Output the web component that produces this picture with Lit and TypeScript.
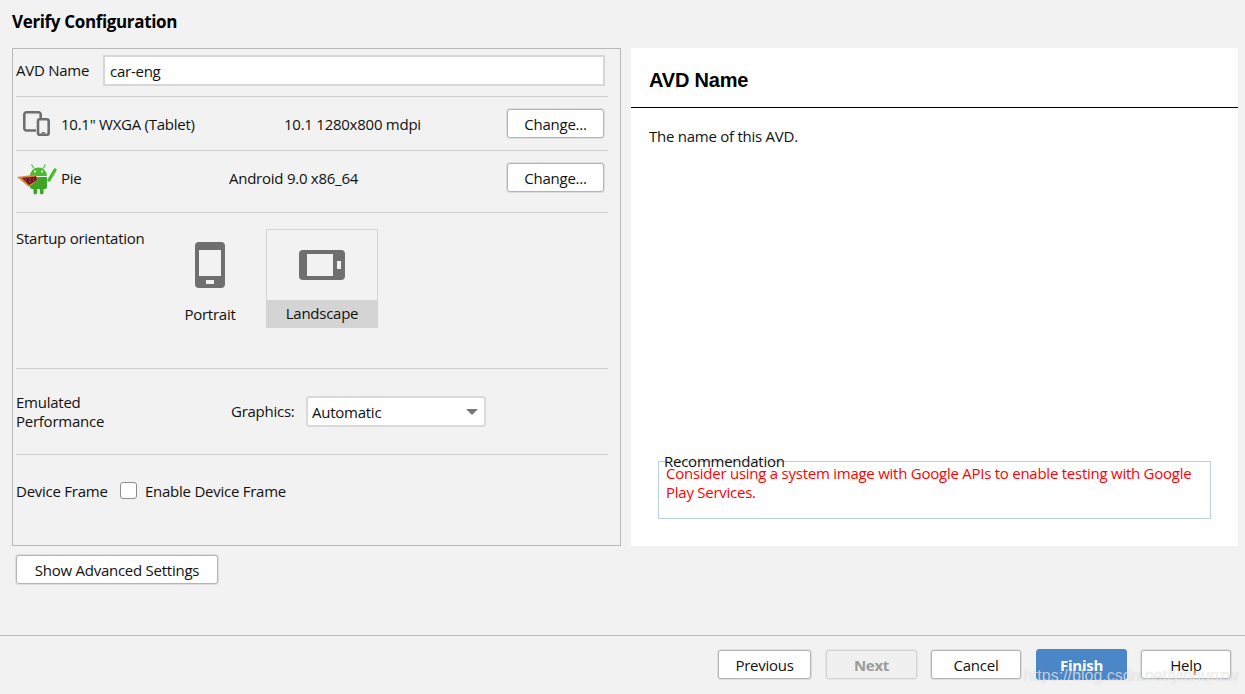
import { LitElement, html, css } from "lit";
import { customElement } from "lit/decorators.js";

@customElement("app-root")
export class AppRoot extends LitElement {
  static styles = css`
    :host {
      display: block;
      width: 1245px;
      height: 694px;
      background: #f2f2f2;
      font-family: "Open Sans", "Noto Sans", sans-serif;
      font-size: 15px;
      letter-spacing: -0.25px;
      color: #111;
      overflow: hidden;
      position: relative;
    }
    .page { display: flex; flex-direction: column; height: 694px; box-sizing: border-box; }
    .title {
      font-weight: 700; font-size: 17px; line-height: 22px; letter-spacing: -0.35px;
      padding: 11px 0 0 12px; height: 48px; box-sizing: border-box; flex: none; color: #000;
    }
    .main { display: flex; gap: 10px; padding-left: 12px; height: 498px; flex: none; }
    .left {
      width: 609px; box-sizing: border-box; border: 1px solid #b9b9b9;
      padding: 0 12px 0 3px; display: flex; flex-direction: column;
    }
    .row { border-bottom: 1px solid #cfcfcf; box-sizing: border-box; display: flex; align-items: center; flex: none; }
    .r1 { height: 48px; }
    .r2 { height: 54px; }
    .r3 { height: 62px; padding-bottom: 8px; }
    .r4 { height: 156px; align-items: flex-start; }
    .r5 { height: 86px; }
    .r6 { border: none; flex: 1; align-items: flex-start; padding-top: 26px; }
    .input {
      margin-left: 13px; width: 502px; height: 31px; box-sizing: border-box;
      background: #fff; border: 2px solid #d6d6d6; padding-left: 5px;
      display: flex; align-items: center; margin-top: -4px;
    }
    .r1 .lbl { margin-top: -6px; width: 74px; white-space: nowrap; }
    .btn {
      background: #fff; border: 1px solid #b4b4b4; border-radius: 3px;
      box-shadow: 0 0 0 1px #dedede; box-sizing: border-box;
      display: flex; align-items: center; justify-content: center;
      height: 29px; flex: none; color: #111;
    }
    .change { width: 97px; margin: 0 4px 0 auto; }
    .dev-ic { width: 27px; height: 25px; margin-left: 7px; flex: none; }
    .col-name { margin-left: 11px; width: 223px; }
    .and-ic { width: 42px; height: 34px; flex: none; }
    .col-pie { margin-left: 3px; width: 168px; }
    .orient { display: flex; }
    .orient .lbl { width: 138px; padding-top: 15px; }
    .opt { width: 112px; height: 99px; box-sizing: border-box; display: flex; flex-direction: column; align-items: center; }
    .opt svg { flex: none; }
    .opt .cap { height: 28px; line-height: 27px; width: 100%; text-align: center; margin-top: auto; }
    .opt.sel { border: 1px solid #d5d5d5; margin-top: 16px; }
    .opt.sel .cap { background: #d4d4d4; margin: auto -1px -1px; width: 112px; }
    .opt.port { margin-top: 16px; height: 100px; padding-bottom: 0; }
    .opt.port svg { margin-top: 13px; }
    .opt.sel svg { margin-top: 20px; }
    .r5 .lbl { width: 215px; line-height: 19px; }
    .gfx { width: 62px; margin-top: -2px; white-space: nowrap; }
    .select {
      margin-left: 13px; width: 180px; height: 31px; box-sizing: border-box;
      background: #fff; border: 2px solid #d9d9d9; border-radius: 3px;
      padding: 0 6px 0 4px; display: flex; align-items: center; justify-content: space-between;
    }
    .tri { width: 0; height: 0; border-left: 6px solid transparent; border-right: 6px solid transparent; border-top: 6px solid #777; }
    .r6 .lbl { width: 90px; white-space: nowrap; }
    .check { width: 17px; height: 17px; margin: 1px 8px 0 14px; box-sizing: border-box; background: #fff; border: 1px solid #8e8e8e; border-radius: 3px; flex: none; }
    .right { width: 607px; background: #fff; display: flex; flex-direction: column; }
    .rhead {
      height: 60px; box-sizing: border-box; border-bottom: 1px solid #000; flex: none;
      font-family: "Liberation Sans", Arial, sans-serif; font-weight: 700; font-size: 20px; letter-spacing: -0.2px;
      color: #000; padding: 20px 0 0 18px; line-height: 25px;
    }
    .rdesc { padding: 19px 0 0 18px; line-height: 19px; flex: 1; }
    .rec {
      position: relative; margin: 0 27px 27px; height: 58px; box-sizing: border-box;
      border: 1px solid #b8cfe5; color: #f00; padding: 2px 7px 0; line-height: 19px;
    }
    .rec .legend {
      position: absolute; left: 5px; top: -10px; color: #111; line-height: 18px; padding-right: 2px;
    }
    .rec .legend::before {
      content: ""; position: absolute; left: 0; right: 0; top: 9px; height: 2px; background: #fff; z-index: -1;
    }
    .adv { padding: 9px 0 0 16px; height: 89px; box-sizing: border-box; flex: none; }
    .adv .btn { width: 202px; }
    .foot {
      flex: 1; border-top: 1px solid #bdbdbd; display: flex; gap: 14px; justify-content: flex-end;
      padding: 14px 14px 0 0;
    }
    .foot .btn { width: 90px; height: 29px; }
    .foot .prev { width: 93px; }
    .foot .dis { width: 91px; margin-left: 1px; background: #f0f0f0; border-color: #d4d4d4; box-shadow: 0 0 0 1px #e6e6e6; color: #9b9b9b; font-weight: 700; }
    .foot .pri { width: 91px; margin: -1px 0 0 1px; background: #4a86c8; border-color: #4a86c8; box-shadow: none; color: #fff; font-weight: 700; height: 31px; }
    .mark {
      position: absolute; left: 1024px; top: 666px; color: rgba(255,255,255,.62);
      font-family: "Liberation Sans", Arial, sans-serif; font-size: 16px; letter-spacing: 0; line-height: 20px;
      white-space: nowrap; text-shadow: 0 0 1px rgba(120,120,120,.35);
    }
  `;

  render() {
    return html`
      <div class="page">
        <div class="title">Verify Configuration</div>
        <div class="main">
          <div class="left">
            <div class="row r1">
              <span class="lbl">AVD Name</span>
              <div class="input">car-eng</div>
            </div>
            <div class="row r2">
              <svg class="dev-ic" viewBox="0 0 27 25" fill="none" stroke="#6f6f6f">
                <path d="M13 19.500H3.500A2.200 2.200 0 0 1 1.300 17.300V3.500A2.200 2.200 0 0 1 3.500 1.300H15.500A2.200 2.200 0 0 1 17.700 3.500V7" stroke-width="2.600"/>
                <rect x="15" y="8.300" width="10.700" height="15.400" rx="1.800" fill="#f2f2f2" stroke-width="2.600"/>
                <rect x="18.800" y="21" width="3" height="1.500" fill="#6f6f6f" stroke="none"/>
              </svg>
              <span class="col-name">10.1" WXGA (Tablet)</span>
              <span>10.1 1280x800 mdpi</span>
              <div class="btn change">Change...</div>
            </div>
            <div class="row r3">
              <svg class="and-ic" viewBox="0 0 42 34">
                <path d="M33 19L39 9" stroke="#4dbb2f" stroke-width="3.400" stroke-linecap="round"/>
                <path d="M14 15a8.500 8.500 0 0 1 17 0z" fill="#4dbb2f"/>
                <path d="M18 7.500L15.500 3.500M27 7.500L29.500 3.500" stroke="#4dbb2f" stroke-width="1.100"/>
                <circle cx="19" cy="10.500" r="1.100" fill="#fff"/><circle cx="26" cy="10.500" r="1.100" fill="#fff"/>
                <path d="M14 16h17v10a2 2 0 0 1-2 2h-13a2 2 0 0 1-2-2z" fill="#3da526"/>
                <rect x="17.500" y="25" width="3.600" height="8.500" rx="1.800" fill="#3da526"/>
                <rect x="24" y="25" width="3.600" height="8.500" rx="1.800" fill="#3da526"/>
                <path d="M1 16L20 13.500L22 19L13 26Z" fill="#d08a3c"/>
                <path d="M6 17L20 15.500L21 19L13 24Z" fill="#6d1226"/>
                <path d="M9 18l2 1M13 17l2 1.500M17 17l1.500 1.500M13 21l2-1M17 20l1-1" stroke="#d9475d" stroke-width="1"/>
              </svg>
              <span class="col-pie">Pie</span>
              <span>Android 9.0 x86_64</span>
              <div class="btn change">Change...</div>
            </div>
            <div class="row r4">
              <div class="orient">
                <div class="lbl">Startup orientation</div>
                <div class="opt port">
                  <svg width="30" height="46" viewBox="0 0 30 46">
                    <rect width="30" height="46" rx="4" fill="#6f6f6f"/>
                    <rect x="4" y="8" width="22" height="26" fill="#f2f2f2"/>
                    <rect x="11" y="38" width="8" height="4" fill="#f2f2f2"/>
                  </svg>
                  <div class="cap">Portrait</div>
                </div>
                <div class="opt sel">
                  <svg width="46" height="30" viewBox="0 0 46 30">
                    <rect width="46" height="30" rx="4" fill="#6f6f6f"/>
                    <rect x="8" y="4" width="26" height="22" fill="#f2f2f2"/>
                    <rect x="38" y="11" width="4" height="8" fill="#f2f2f2"/>
                  </svg>
                  <div class="cap">Landscape</div>
                </div>
              </div>
            </div>
            <div class="row r5">
              <div class="lbl">Emulated<br />Performance</div>
              <span class="gfx">Graphics:</span>
              <div class="select"><span>Automatic</span><span class="tri"></span></div>
            </div>
            <div class="row r6">
              <span class="lbl">Device Frame</span>
              <span class="check"></span>
              <span>Enable Device Frame</span>
            </div>
          </div>
          <div class="right">
            <div class="rhead">AVD Name</div>
            <div class="rdesc">The name of this AVD.</div>
            <div class="rec">
              <span class="legend">Recommendation</span>
              Consider using a system image with Google APIs to enable testing with Google Play Services.
            </div>
          </div>
        </div>
        <div class="adv"><div class="btn">Show Advanced Settings</div></div>
        <div class="foot">
          <div class="btn prev">Previous</div>
          <div class="btn dis">Next</div>
          <div class="btn">Cancel</div>
          <div class="btn pri">Finish</div>
          <div class="btn">Help</div>
        </div>
      </div>
      <div class="mark">https://blog.csdn.net/yinhunzw</div>
    `;
  }
}
